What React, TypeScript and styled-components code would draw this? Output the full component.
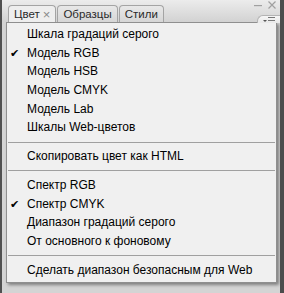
import React from "react";
import styled, { createGlobalStyle } from "styled-components";

const Global = createGlobalStyle`
  html, body {
    margin: 0;
    padding: 0;
    background: #d6d6d6;
  }
  body {
    font-family: "Liberation Sans", Arial, sans-serif;
  }
`;

const Frame = styled.div`
  width: 284px;
  height: 293px;
  box-sizing: border-box;
  border-left: 2px solid #505050;
  border-right: 4px solid #4c4c4c;
  background: #d4d4d4;
  display: flex;
  flex-direction: column;
  overflow: hidden;
`;

const TabBar = styled.div`
  flex-shrink: 0;
  height: 22px;
  display: flex;
  align-items: flex-end;
  padding-left: 6px;
  background: linear-gradient(#ececec, #d2d2d2);
  position: relative;
`;

const Tab = styled.div<{ $active?: boolean }>`
  height: 16px;
  padding: 0 5px;
  margin-right: 1px;
  display: flex;
  align-items: center;
  gap: 3px;
  font-size: 11.5px;
  color: #2a2a2a;
  border: 1px solid #a4a4a4;
  border-bottom: none;
  border-radius: 4px 4px 0 0;
  background: ${(p) => (p.$active ? "#eeeeee" : "linear-gradient(#e8e8e8, #d6d6d6)")};
`;

const Close = styled.span`
  color: #8a8a8a;
  font-size: 13px;
`;

const WinButtons = styled.div`
  position: absolute;
  right: 4px;
  top: 0;
  height: 10px;
  display: flex;
  align-items: center;
  gap: 6px;
`;

const MenuFlyout = styled.div`
  position: absolute;
  right: 0;
  top: 15px;
  width: 22px;
  height: 7px;
  border-radius: 6px 0 0 0;
  background: linear-gradient(#f6f6f6, #e8e8e8);
  border: 1px solid #b4b4b4;
  border-bottom: none;
  border-right: none;
  display: flex;
  align-items: flex-end;
  justify-content: center;
`;

const Menu = styled.div`
  flex-shrink: 0;
  margin-left: 4px;
  margin-right: 3px;
  border: 1px solid #8f8f8f;
  background: #f0f0f0;
  padding: 2px 0 3px;
  box-shadow: 2px 2px 3px rgba(0, 0, 0, 0.4);
`;

const Item = styled.div`
  position: relative;
  height: 18.7px;
  line-height: 18px;
  padding-left: 20px;
  font-size: 12px;
  color: #000;
  white-space: nowrap;
`;

const Check = styled.span`
  position: absolute;
  left: 3px;
  top: 0;
  font-size: 11px;
`;

const Separator = styled.div`
  height: 1px;
  margin: 4.5px 1px;
  background: #a0a0a0;
`;

type Entry = { label: string; checked?: boolean } | "sep";

const entries: Entry[] = [
  { label: "Шкала градаций серого" },
  { label: "Модель RGB", checked: true },
  { label: "Модель HSB" },
  { label: "Модель CMYK" },
  { label: "Модель Lab" },
  { label: "Шкалы Web-цветов" },
  "sep",
  { label: "Скопировать цвет как HTML" },
  "sep",
  { label: "Спектр RGB" },
  { label: "Спектр CMYK", checked: true },
  { label: "Диапазон градаций серого" },
  { label: "От основного к фоновому" },
  "sep",
  { label: "Сделать диапазон безопасным для Web" },
];

export default function App() {
  return (
    <>
      <Global />
      <Frame>
        <TabBar>
          <Tab $active>
            Цвет <Close>×</Close>
          </Tab>
          <Tab>Образцы</Tab>
          <Tab>Стили</Tab>
          <WinButtons>
            <svg width="8" height="8" viewBox="0 0 8 8">
              <rect x="0" y="4" width="8" height="1.2" fill="#a0a0a0" />
            </svg>
            <svg width="8" height="8" viewBox="0 0 8 8">
              <path d="M0.5 0.5 L7.5 7.5 M7.5 0.5 L0.5 7.5" stroke="#a0a0a0" strokeWidth="1.2" />
            </svg>
          </WinButtons>
          <MenuFlyout>
            <svg width="14" height="6" viewBox="0 0 14 6">
              <path d="M1 3 L5 3 L3 5 Z" fill="#555" />
              <rect x="6" y="0" width="7" height="1" fill="#777" />
              <rect x="6" y="3" width="7" height="1" fill="#777" />
            </svg>
          </MenuFlyout>
        </TabBar>
        <Menu>
          {entries.map((e, i) =>
            e === "sep" ? (
              <Separator key={i} />
            ) : (
              <Item key={i}>
                {e.checked && <Check>✔</Check>}
                {e.label}
              </Item>
            )
          )}
        </Menu>
      </Frame>
    </>
  );
}
